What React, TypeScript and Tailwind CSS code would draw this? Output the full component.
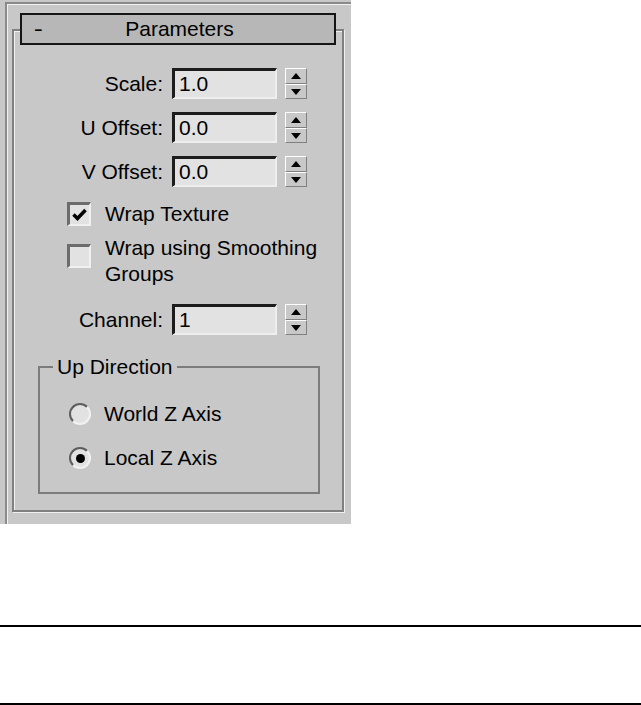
import React from "react";

function Spinner() {
  return (
    <div className="ml-[8px] w-[22px] h-[31px] flex flex-col">
      <div className="h-[16px] flex items-center justify-center bg-[#c8c8c8] border border-t-white border-l-white border-b-[#808080] border-r-[#808080]">
        <svg width="10" height="6" viewBox="0 0 10 6">
          <polygon points="0,6 5,0 10,6" fill="#000" />
        </svg>
      </div>
      <div className="h-[15px] flex items-center justify-center bg-[#c8c8c8] border border-t-white border-l-white border-b-[#808080] border-r-[#808080]">
        <svg width="10" height="6" viewBox="0 0 10 6">
          <polygon points="0,0 10,0 5,6" fill="#000" />
        </svg>
      </div>
    </div>
  );
}

function SpinRow({ label, value, top }: { label: string; value: string; top: string }) {
  return (
    <div className={"flex items-center h-[31px] " + top}>
      <div className="w-[149px] text-right leading-[26px]">{label}</div>
      <div className="ml-[9px] w-[105px] h-[31px] box-border flex items-center pl-[4px] bg-[#e2e2e2] border-t-[3px] border-l-[3px] border-t-[#1c1c1c] border-l-[#1c1c1c] border-b-2 border-r-2 border-b-[#eeeeee] border-r-[#eeeeee] leading-[26px]">
        {value}
      </div>
      <Spinner />
    </div>
  );
}

function Checkbox({ checked }: { checked?: boolean }) {
  return (
    <div className="w-[24px] h-[24px] box-border shrink-0 flex items-center justify-center bg-[#e2e2e2] border-t-[3px] border-l-[3px] border-t-[#6c6c6c] border-l-[#6c6c6c] border-b-2 border-r-2 border-b-[#f0f0f0] border-r-[#f0f0f0]">
      {checked && (
        <svg width="15" height="13" viewBox="0 0 15 13">
          <polyline points="1.5,6.5 5.5,10.5 13.5,2" fill="none" stroke="#000" strokeWidth="3.5" />
        </svg>
      )}
    </div>
  );
}

function Radio({ checked }: { checked?: boolean }) {
  return (
    <div className="w-[22px] h-[22px] box-border rounded-full shrink-0 flex items-center justify-center bg-[#e2e2e2] border-2 border-t-[#5e5e5e] border-l-[#5e5e5e] border-b-[#f2f2f2] border-r-[#f2f2f2]">
      {checked && <div className="w-[9px] h-[9px] rounded-full bg-black" />}
    </div>
  );
}

export default function App() {
  return (
    <div className="w-[641px] bg-white text-black text-[21px] leading-[26px] font-['Liberation_Sans',Arial,sans-serif]">
      <div className="w-[351px] h-[524px] box-border bg-[#c8c8c8] pt-[2px] pl-[5px]">
        <div className="h-full box-border border-t-2 border-l-2 border-[#8a8a8a] shadow-[inset_1px_1px_0_#f2f2f2] pl-[5px] pt-[25px]">
          <div className="w-[332px] h-[483px] box-border border-2 border-[#808080] shadow-[inset_1px_1px_0_#f0f0f0,1px_1px_0_#f0f0f0] flex flex-col">
            <div className="mx-[6px] -mt-[18px] h-[32px] box-border border-2 border-[#141414] bg-[#b7b7b7] grid grid-cols-[30px_1fr_30px] items-center">
              <span className="pl-[9px] leading-[26px] scale-x-[1.3] origin-left">-</span>
              <span className="text-center leading-[26px] pl-[3px]">Parameters</span>
              <span />
            </div>

            <SpinRow label="Scale:" value="1.0" top="mt-[23px]" />
            <SpinRow label="U Offset:" value="0.0" top="mt-[13px]" />
            <SpinRow label="V Offset:" value="0.0" top="mt-[13px]" />

            <div className="mt-[14px] ml-[53px] flex items-center h-[26px]">
              <Checkbox checked />
              <span className="ml-[14px]">Wrap Texture</span>
            </div>

            <div className="mt-[8px] ml-[53px] flex items-start">
              <div className="mt-[9px]">
                <Checkbox />
              </div>
              <span className="ml-[14px] leading-[26px]">
                Wrap using Smoothing
                <br />
                Groups
              </span>
            </div>

            <SpinRow label="Channel:" value="1" top="mt-[17px]" />

            <fieldset className="mt-[19px] ml-[24px] w-[282px] box-border border-2 border-[#7c7c7c] px-[13px] pb-[21px]">
              <legend className="px-[4px] leading-[26px]">Up Direction</legend>
              <div className="mt-[21px] ml-[16px] flex items-center h-[26px]">
                <Radio />
                <span className="ml-[13px]">World Z Axis</span>
              </div>
              <div className="mt-[18px] ml-[16px] flex items-center h-[26px]">
                <Radio checked />
                <span className="ml-[13px]">Local Z Axis</span>
              </div>
            </fieldset>
          </div>
        </div>
      </div>
      <div className="mt-[101px] h-[2px] bg-black" />
      <div className="mt-[76px] h-[2px] bg-black" />
    </div>
  );
}
